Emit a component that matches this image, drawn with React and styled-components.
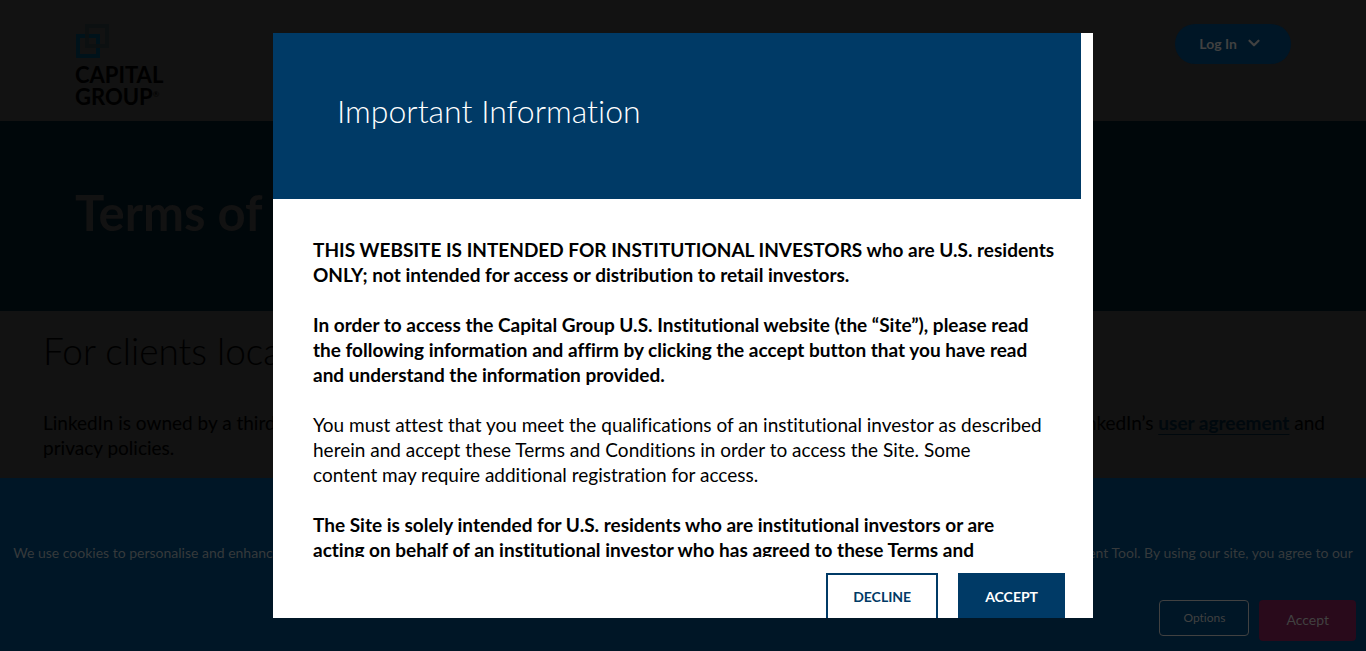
import styled, { createGlobalStyle } from 'styled-components'
import { ChevronDown } from 'lucide-react'

const GlobalStyle = createGlobalStyle`
    * {
        box-sizing: border-box;
    }

    body {
        margin: 0;
        background: #121212;
        color: #000;
        font-family: Lato, 'Liberation Sans', sans-serif;
        font-variant-ligatures: no-common-ligatures;
        overflow: hidden;
    }

    h1, h2, p {
        margin: 0;
    }

    button {
        font-family: inherit;
        font-variant-ligatures: inherit;
        cursor: pointer;
    }
`

const Header = styled.header`
    display: flex;
    justify-content: space-between;
    align-items: flex-start;
    padding: 24px 75px 13px;
`

const LogoLink = styled.a`
    display: block;
    color: #000;
    font-size: 22px;
    font-weight: 700;
    line-height: 22px;
    text-decoration: none;

    svg {
        display: block;
        margin-bottom: 6px;
    }
`

const Registered = styled.sup`
    font-size: 8px;
    font-weight: 400;
    line-height: 0;
`

const LoginButton = styled.button`
    display: flex;
    align-items: center;
    gap: 8px;
    height: 40px;
    padding: 0 28px 2px 24px;
    border: 0;
    border-radius: 20px;
    background: #001626;
    color: #414141;
    font-size: 14px;
    font-weight: 700;
`

const Hero = styled.section`
    padding: 56px 75px 64px;
    background: #00070a;
`

const HeroTitle = styled.h1`
    color: #121212;
    font-size: 49px;
    font-weight: 700;
    line-height: 70px;
`

const Article = styled.main`
    padding: 15px 30px 0 43px;
`

const ArticleTitle = styled.h2`
    margin-bottom: 34px;
    font-size: 37px;
    font-weight: 300;
    line-height: 50px;
`

const ArticleText = styled.p`
    font-size: 19px;
    line-height: 25px;
`

const TextLink = styled.a`
    color: #00080d;
    font-weight: 700;
    text-underline-offset: 4px;
`

const CookieBar = styled.aside`
    position: fixed;
    right: 0;
    bottom: 0;
    left: 0;
    padding: 64px 10px 10px;
    background: #001626;
    color: #363a3c;
`

const CookieText = styled.p`
    font-size: 14px;
    line-height: 22px;
    text-align: center;
`

const CookieActions = styled.div`
    display: flex;
    justify-content: flex-end;
    align-items: flex-start;
    gap: 10px;
    margin-top: 14px;
`

const CookieButton = styled.button`
    height: ${({ $primary }) => $primary ? '41px' : '36px'};
    padding: 0 ${({ $primary }) => $primary ? '27px' : '23px'} 2px;
    border: ${({ $primary }) => $primary ? '0' : '1px solid #414141'};
    border-radius: 4px;
    background: ${({ $primary }) => $primary ? '#290a1b' : 'transparent'};
    color: #414141;
    font-size: ${({ $primary }) => $primary ? '14px' : '12px'};
`

const Backdrop = styled.div`
    position: fixed;
    inset: 0;
    display: flex;
    justify-content: center;
    padding: 33px 20px;
`

const Dialog = styled.div`
    display: flex;
    flex-direction: column;
    width: 100%;
    max-width: 820px;
    overflow: hidden;
    background: #fff;
`

const DialogHeader = styled.header`
    flex: none;
    margin-right: 12px;
    padding: 58px 64px 68px;
    background: #003a66;
`

const DialogTitle = styled.h2`
    color: #fff;
    font-size: 32px;
    font-weight: 300;
    line-height: 40px;
`

const DialogBody = styled.div`
    flex: none;
    height: 358px;
    padding: 38px 20px 0 40px;
    overflow: hidden;
`

const Paragraph = styled.p`
    margin-bottom: 25px;
    font-size: 19px;
    font-weight: ${({ $strong }) => $strong ? 700 : 400};
    line-height: 25px;
    white-space: pre-line;
`

const DialogActions = styled.footer`
    display: flex;
    flex: none;
    justify-content: flex-end;
    gap: 20px;
    padding: 16px 28px;
`

const DialogButton = styled.button`
    height: 48px;
    padding: 0 25px 2px;
    border: 2px solid #003a66;
    background: ${({ $filled }) => $filled ? '#003a66' : '#fff'};
    color: ${({ $filled }) => $filled ? '#fff' : '#003a66'};
    font-size: 14px;
    font-weight: 700;
`

const LogoMark = () => (
    <svg width='35' height='34' viewBox='0 0 35 34' fill='none' strokeWidth='4'>
        <rect x='3' y='12' width='20' height='20' stroke='#00121a' />
        <rect x='12' y='2' width='20' height='20' stroke='#0c1012' strokeOpacity='0.85' />
    </svg>
)

const terms = [
    {
        strong: true,
        text: `THIS WEBSITE IS INTENDED FOR INSTITUTIONAL INVESTORS who are U.S. residents
            ONLY; not intended for access or distribution to retail investors.`,
    },
    {
        strong: true,
        text: `In order to access the Capital Group U.S. Institutional website (the “Site”), please read
            the following information and affirm by clicking the accept button that you have read
            and understand the information provided.`,
    },
    {
        strong: false,
        text: `You must attest that you meet the qualifications of an institutional investor as described
            herein and accept these Terms and Conditions in order to access the Site. Some
            content may require additional registration for access.`,
    },
    {
        strong: true,
        text: `The Site is solely intended for U.S. residents who are institutional investors or are
            acting on behalf of an institutional investor who has agreed to these Terms and`,
    },
]

const TermsDialog = () => (
    <Backdrop>
        <Dialog role='dialog' aria-modal='true' aria-labelledby='terms-title'>
            <DialogHeader>
                <DialogTitle id='terms-title'>Important Information</DialogTitle>
            </DialogHeader>
            <DialogBody>
                {terms.map(({ strong, text }) => <Paragraph key={text} $strong={strong}>{text}</Paragraph>)}
            </DialogBody>
            <DialogActions>
                <DialogButton type='button'>DECLINE</DialogButton>
                <DialogButton type='button' $filled>ACCEPT</DialogButton>
            </DialogActions>
        </Dialog>
    </Backdrop>
)

const App = () => (
    <>
        <GlobalStyle />
        <Header>
            <LogoLink href='#'>
                <LogoMark />
                CAPITAL<br />GROUP<Registered>®</Registered>
            </LogoLink>
            <LoginButton type='button'>
                Log In
                <ChevronDown size={18} strokeWidth={3} />
            </LoginButton>
        </Header>
        <Hero>
            <HeroTitle>Terms of Use</HeroTitle>
        </Hero>
        <Article>
            <ArticleTitle>For clients located in the United States</ArticleTitle>
            <ArticleText>
                LinkedIn is owned by a third party unaffiliated with Capital Group. Your use of LinkedIn is
                subject to the terms and guides of LinkedIn’s <TextLink href='#'>user agreement</TextLink> and
                privacy policies.
            </ArticleText>
        </Article>
        <CookieBar>
            <CookieText>
                We use cookies to personalise and enhance your experience on our site. Visit our Privacy Policy
                for further information or manage your personal preferences in our Cookie Consent Tool. By using our
                site, you agree to our use of cookies.
            </CookieText>
            <CookieActions>
                <CookieButton type='button'>Options</CookieButton>
                <CookieButton type='button' $primary>Accept</CookieButton>
            </CookieActions>
        </CookieBar>
        <TermsDialog />
    </>
)

export default App
